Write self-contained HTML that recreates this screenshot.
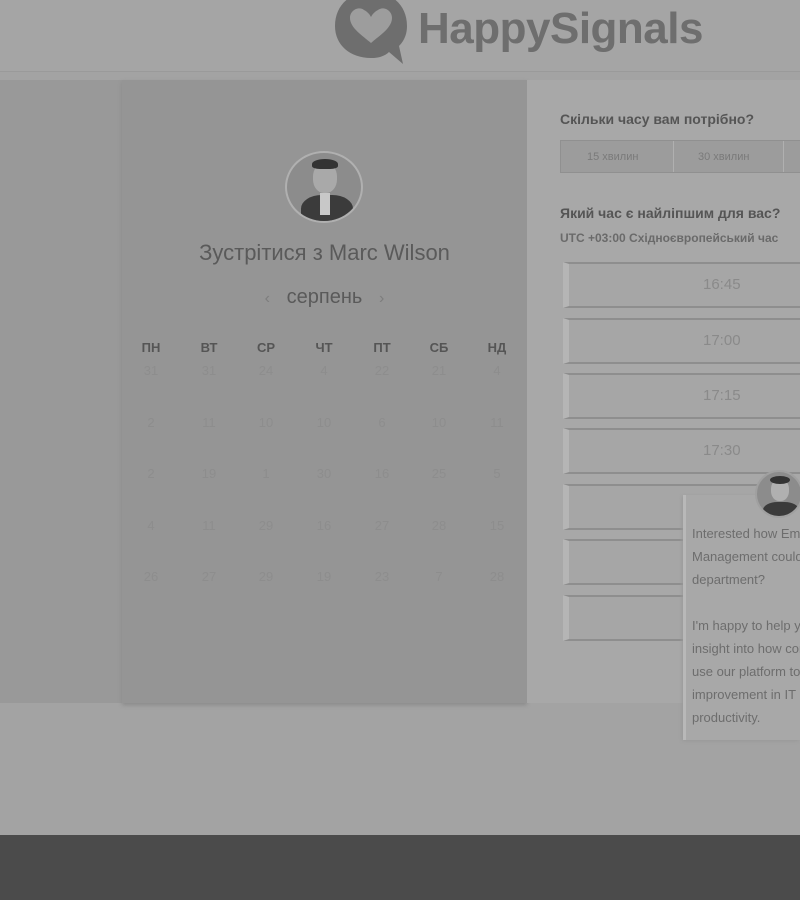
<!DOCTYPE html>
<html><head><meta charset="utf-8"><style>
*{margin:0;padding:0;box-sizing:border-box}
html,body{width:800px;height:900px;overflow:hidden}
body{background:#a3a3a3;font-family:"Liberation Sans",sans-serif;position:relative}
#w{position:absolute;left:0;top:0;width:800px;height:900px;overflow:hidden}
.abs{position:absolute}
.slot{position:absolute;left:563px;width:237px;height:46px;border:2px solid #8e8e8e;border-right:none;border-left:6px solid #b5b5b5;background:#a6a6a6;color:#8a8a8a;font-size:15px;line-height:42px;padding-left:134px}
.dh{position:absolute;top:340px;width:40px;text-align:center;font-size:13px;font-weight:bold;color:#555}
.d{position:absolute;width:40px;text-align:center;font-size:13px;color:#8d8d8d}
</style></head><body><div id="w">
<div class="abs" style="left:0;top:0;width:800px;height:72px;background:#a5a5a5;border-bottom:1px solid #9a9a9a"></div>
<svg class="abs" style="left:333px;top:0" width="80" height="66" viewBox="0 0 80 66">
<path d="M38 -8 C16 -8 2 6 2 26 C2 45 17 58 38 58 C46 58 52 56 56 52 L70 64 L66 46 C72 40 74 33 74 26 C74 6 60 -8 38 -8 Z" fill="#6e6e6e"/>
<path d="M38 43 C30 36 17 28 17 18 C17 10 26 6 31 10 C35 12 37 15 38 17 C39 15 41 12 45 10 C50 6 59 10 59 18 C59 28 46 36 38 43 Z" fill="#9d9d9d"/>
</svg>
<div class="abs" style="left:418px;top:4px;font-size:44px;font-weight:bold;color:#6e6e6e;letter-spacing:-0.5px">HappySignals</div>
<div class="abs" style="left:0;top:80px;width:122px;height:623px;background:#999"></div>
<div class="abs" style="left:122px;top:80px;width:405px;height:623px;background:#959595;box-shadow:0 2px 4px #8a8a8a"></div>
<div class="abs" style="left:527px;top:80px;width:273px;height:623px;background:#a8a8a8"></div>
<div class="abs" style="left:285px;top:151px;width:78px;height:72px;border-radius:50%;background:#8c8c8c;border:2px solid #b0b0b0;overflow:hidden">
<div class="abs" style="left:26px;top:10px;width:24px;height:30px;border-radius:45%;background:#a9a9a9"></div>
<div class="abs" style="left:25px;top:6px;width:26px;height:10px;border-radius:50% 50% 30% 30%;background:#333"></div>
<div class="abs" style="left:14px;top:42px;width:52px;height:34px;border-radius:40% 40% 0 0;background:#3b3b3b"></div>
<div class="abs" style="left:33px;top:40px;width:10px;height:22px;background:#c8c8c8"></div>
</div>
<div class="abs" style="left:122px;top:240px;width:405px;text-align:center;font-size:22px;color:#5a5a5a">Зустрітися з Marc Wilson</div>
<div class="abs" style="left:122px;top:286px;width:405px;text-align:center;font-size:20px;color:#5a5a5a"><span style="color:#7d7d7d;font-size:16px">‹</span>&nbsp;&nbsp;&nbsp;серпень&nbsp;&nbsp;&nbsp;<span style="color:#7d7d7d;font-size:16px">›</span></div>
<div class="dh" style="left:131px">ПН</div><div class="dh" style="left:189px">ВТ</div><div class="dh" style="left:246px">СР</div><div class="dh" style="left:304px">ЧТ</div><div class="dh" style="left:362px">ПТ</div><div class="dh" style="left:419px">СБ</div><div class="dh" style="left:477px">НД</div>
<div class="d" style="left:131px;top:363px">31</div><div class="d" style="left:189px;top:363px">31</div><div class="d" style="left:246px;top:363px">24</div><div class="d" style="left:304px;top:363px">4</div><div class="d" style="left:362px;top:363px">22</div><div class="d" style="left:419px;top:363px">21</div><div class="d" style="left:477px;top:363px">4</div>
<div class="d" style="left:131px;top:415px">2</div><div class="d" style="left:189px;top:415px">11</div><div class="d" style="left:246px;top:415px">10</div><div class="d" style="left:304px;top:415px">10</div><div class="d" style="left:362px;top:415px">6</div><div class="d" style="left:419px;top:415px">10</div><div class="d" style="left:477px;top:415px">11</div>
<div class="d" style="left:131px;top:466px">2</div><div class="d" style="left:189px;top:466px">19</div><div class="d" style="left:246px;top:466px">1</div><div class="d" style="left:304px;top:466px">30</div><div class="d" style="left:362px;top:466px">16</div><div class="d" style="left:419px;top:466px">25</div><div class="d" style="left:477px;top:466px">5</div>
<div class="d" style="left:131px;top:518px">4</div><div class="d" style="left:189px;top:518px">11</div><div class="d" style="left:246px;top:518px">29</div><div class="d" style="left:304px;top:518px">16</div><div class="d" style="left:362px;top:518px">27</div><div class="d" style="left:419px;top:518px">28</div><div class="d" style="left:477px;top:518px">15</div>
<div class="d" style="left:131px;top:569px">26</div><div class="d" style="left:189px;top:569px">27</div><div class="d" style="left:246px;top:569px">29</div><div class="d" style="left:304px;top:569px">19</div><div class="d" style="left:362px;top:569px">23</div><div class="d" style="left:419px;top:569px">7</div><div class="d" style="left:477px;top:569px">28</div>
<div class="abs" style="left:560px;top:111px;font-size:14px;font-weight:bold;color:#555">Скільки часу вам потрібно?</div>
<div class="abs" style="left:560px;top:140px;width:240px;height:33px;background:#9c9c9c;border:1px solid #909090;border-right:none"></div>
<div class="abs" style="left:673px;top:141px;width:1px;height:31px;background:#b0b0b0"></div>
<div class="abs" style="left:783px;top:141px;width:1px;height:31px;background:#b0b0b0"></div>
<div class="abs" style="left:587px;top:151px;font-size:11px;color:#7a7a7a">15 хвилин</div>
<div class="abs" style="left:698px;top:151px;font-size:11px;color:#7a7a7a">30 хвилин</div>
<div class="abs" style="left:560px;top:205px;font-size:14px;font-weight:bold;color:#555;white-space:nowrap">Який час є найліпшим для вас?</div>
<div class="abs" style="left:560px;top:231px;font-size:12px;font-weight:bold;color:#6a6a6a;white-space:nowrap">UTC +03:00 Східноєвропейський час</div>
<div class="slot" style="top:262px">16:45</div>
<div class="slot" style="top:318px">17:00</div>
<div class="slot" style="top:373px">17:15</div>
<div class="slot" style="top:428px">17:30</div>
<div class="slot" style="top:484px"></div>
<div class="slot" style="top:539px"></div>
<div class="slot" style="top:595px"></div>
<div class="abs" style="left:683px;top:495px;width:117px;height:245px;background:#a8a8a8;border-left:3px solid #b8b8b8;box-shadow:-1px 1px 3px #999"></div>
<div class="abs" style="left:755px;top:470px;width:48px;height:48px;border-radius:50%;background:#8c8c8c;border:2px solid #a0a0a0;overflow:hidden">
<div class="abs" style="left:14px;top:7px;width:18px;height:22px;border-radius:45%;background:#b0b0b0"></div>
<div class="abs" style="left:13px;top:4px;width:20px;height:8px;border-radius:50%;background:#333"></div>
<div class="abs" style="left:6px;top:30px;width:36px;height:20px;border-radius:40% 40% 0 0;background:#3b3b3b"></div>
</div>
<div class="abs" style="left:692px;top:522px;width:108px;overflow:hidden;font-size:13px;line-height:23px;color:#6d6d6d;white-space:nowrap">Interested how Employee<br>Management could help your<br>department?<br><br>I'm happy to help you get<br>insight into how companies<br>use our platform to drive<br>improvement in IT<br>productivity.</div>
<div class="abs" style="left:0;top:835px;width:800px;height:65px;background:#4b4b4b"></div>
</div></body></html>
